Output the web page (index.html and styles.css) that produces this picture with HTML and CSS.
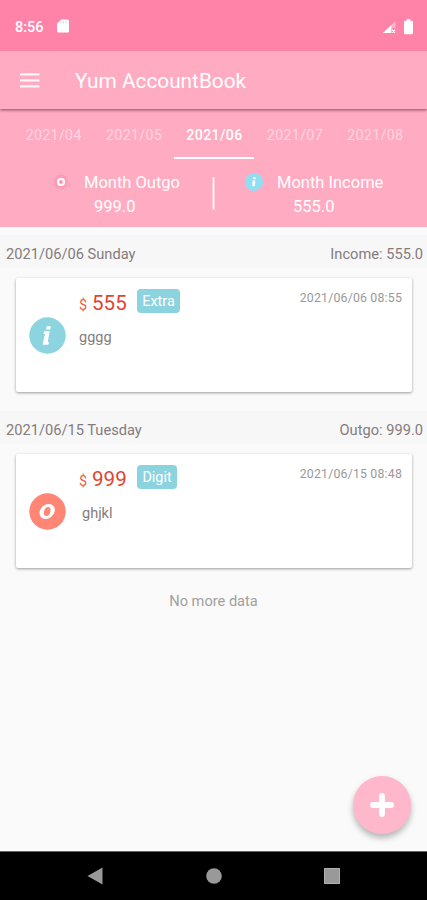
FILE: index.html
```html
<!DOCTYPE html>
<html lang="en">
<head>
<meta charset="utf-8">
<title>Yum AccountBook</title>
<link rel="stylesheet" href="styles.css">
</head>
<body>
<div class="screen">
  <div class="status">
    <span class="clock">8:56</span>
    <svg class="sd" width="12" height="14" viewBox="0 0 12 14"><path d="M4.3 .5H10.5Q12 .5 12 2V12Q12 13.5 10.5 13.5H1.5Q0 13.5 0 12V4.8Z" fill="#fff"/><path d="M4.2 2.3v2.2M6.5 2.3v2.2M8.8 2.3v2.2" stroke="#ffb5c9" stroke-width=".8"/></svg>
    <svg class="signal" width="13" height="12" viewBox="0 0 13 12"><path d="M0 12L12.5 0V7H8.5V12Z" fill="#fff" opacity=".4"/><path d="M0 12L8.3 4V12Z" fill="#fff"/><path d="M9.3 8.7L12 11.7M12 8.7L9.3 11.7" stroke="#fff" stroke-width="1.3"/></svg>
    <svg class="battery" width="9" height="16" viewBox="0 0 9 16"><path d="M2.7 0H6.3V1.7H7.8Q9 1.7 9 2.9V14Q9 15.3 7.8 15.3H1.2Q0 15.3 0 14V2.9Q0 1.7 1.2 1.7H2.7Z" fill="#fff"/></svg>
  </div>
  <header class="appbar">
    <svg class="menu" width="20" height="15" viewBox="0 0 20 15"><path d="M0 1.4H19.5M0 7.4H19.5M0 13.4H19.5" stroke="#fff" stroke-width="2.4" opacity=".9"/></svg>
    <h1>Yum AccountBook</h1>
  </header>
  <nav class="tabs">
    <span>2021/04</span><span>2021/05</span><span class="active">2021/06</span><span>2021/07</span><span>2021/08</span>
  </nav>
  <section class="summary">
    <div class="total outgo">
      <svg width="18" height="18" viewBox="0 0 18 18"><circle cx="9" cy="9" r="7.5" fill="#ff9db9"/><circle cx="9" cy="9" r="3" fill="#ff91ad" stroke="#fff" stroke-width="2.2"/></svg>
      <div><p>Month Outgo</p><p class="sum">999.0</p></div>
    </div>
    <i class="divider"></i>
    <div class="total income">
      <svg width="18" height="18" viewBox="0 0 18 18"><circle cx="9" cy="9" r="9" fill="#91def3"/><path d="M9.5 4.3L9.3 6M9 7.4L8.5 13.2" stroke="#fff" stroke-width="2.7"/></svg>
      <div><p>Month Income</p><p class="sum">555.0</p></div>
    </div>
  </section>
  <main>
    <div class="day"><span>2021/06/06 Sunday</span><span>Income: 555.0</span></div>
    <article class="card">
      <svg class="kind" width="37" height="37" viewBox="0 0 37 37"><circle cx="18.5" cy="18.5" r="18.2" fill="#8cd4e0"/><path d="M17.7 9.2H21.8L21.2 12.4H17.1ZM15 14.3H20.8L18.7 24.9H20L19.4 27.7H13.6L15.9 17H14.5Z" fill="#fff"/></svg>
      <div class="detail">
        <div class="line"><small>$</small><b>555</b><em>Extra</em><time>2021/06/06 08:55</time></div>
        <p>gggg</p>
      </div>
    </article>
    <div class="day"><span>2021/06/15 Tuesday</span><span>Outgo: 999.0</span></div>
    <article class="card">
      <svg class="kind" width="37" height="37" viewBox="0 0 37 37"><circle cx="18.5" cy="18.5" r="18.2" fill="#ff8575"/><g transform="translate(3.6) skewX(-12)"><ellipse cx="18.5" cy="18.5" rx="7.5" ry="7.4" fill="#fff"/><ellipse cx="18.5" cy="18.5" rx="3.2" ry="4.6" fill="#ff8575"/></g></svg>
      <div class="detail">
        <div class="line"><small>$</small><b>999</b><em class="digit">Digit</em><time>2021/06/15 08:48</time></div>
        <p class="inset">ghjkl</p>
      </div>
    </article>
    <p class="end">No more data</p>
    <div class="fab"><svg width="24" height="24" viewBox="0 0 24 24"><path d="M12 3V21M3 12H21" stroke="#fff" stroke-width="5.8" stroke-linecap="round"/></svg></div>
  </main>
  <footer class="sysnav">
    <svg width="16" height="18" viewBox="0 0 16 18"><path d="M.5 9L15.5 .5V17.5Z" fill="#999"/></svg>
    <svg width="16" height="16" viewBox="0 0 16 16"><circle cx="8" cy="8" r="7.8" fill="#999"/></svg>
    <svg width="16" height="16" viewBox="0 0 16 16"><path d="M.5 .5H15.5V15.5H.5Z" fill="#999" stroke="#b4b4b4"/></svg>
  </footer>
</div>
</body>
</html>
```

FILE: styles.css
```css
* { box-sizing: border-box; }
body, h1, p { margin: 0; }
body { font-family: Roboto, "Liberation Sans", sans-serif; color: #857b7d; }
svg { display: block; flex: none; }
.screen { width: 427px; height: 900px; display: flex; flex-direction: column; overflow: hidden; background: #fafafa; }

.status { height: 51px; flex: none; display: flex; align-items: center; padding: 2px 14px 0 15px; background: #ff83a8; color: #fff; position: relative; z-index: 2; }
.clock { font-size: 14.5px; font-weight: 500; width: 42px; padding-top: 1px; }
.sd { margin-top: -2px; }
.signal { margin-left: auto; }
.battery { margin-left: 8px; }

.appbar { height: 58px; flex: none; display: flex; align-items: center; padding: 2px 20px 0; background: #ffabc2; color: #fff; position: relative; z-index: 1; box-shadow: 0 1px 3px rgba(70, 20, 40, .65); }
.menu { margin-top: -2px; }
h1 { margin-left: 35px; font-size: 20.8px; font-weight: 400; }

.tabs { height: 50px; flex: none; display: flex; padding: 0 12px 0 13px; background: #ffabc2; color: #ffd5e1; }
.tabs span { flex: 1; text-align: center; font-size: 14.2px; line-height: 52px; letter-spacing: .35px; border-bottom: 2px solid transparent; height: 50px; padding-left: 1px; }
.tabs .active { color: #fff; font-weight: 500; border-color: #fff; }

.summary { height: 68px; flex: none; display: flex; background: #ffabc2; color: #fff; }
.total { display: flex; padding-top: 14px; font-size: 16.5px; line-height: 20px; }
.total p + p { margin-top: 4px; }
.outgo { width: 213px; padding-left: 52px; }
.outgo div { margin-left: 14px; }
.outgo .sum { padding-left: 10px; }
.income { padding-left: 31px; }
.income div { margin-left: 14px; }
.income .sum { padding-left: 16px; }
.divider { width: 1px; height: 31px; margin-top: 19px; background: #fff; outline: .5px solid rgba(255,255,255,.4); }

main { flex: 1; position: relative; padding-top: 8px; }
.day { height: 33px; display: flex; justify-content: space-between; align-items: center; padding: 4px 4px 0 6px; background: #f7f7f7; font-size: 14.65px; }
.card { height: 114px; margin: 10px 15px 19px 16px; display: flex; padding-left: 13px; background: #fff; border-radius: 2px; box-shadow: 0 1px 3px rgba(0, 0, 0, .38); }
.kind { margin-top: 39px; }
.detail { flex: 1; margin-left: 13px; padding-top: 11px; }
.line { display: flex; height: 27px; padding-right: 10px; }
.line small { width: 13px; font-size: 14.5px; line-height: 33px; color: #ec604f; }
.line b { width: 45px; font-size: 20.6px; font-weight: 400; line-height: 29px; color: #e24432; }
.line em { width: 43px; height: 24px; border-radius: 4px; background: #8bd3df; color: #fff; text-align: center; font-size: 14.4px; font-style: normal; line-height: 25px; }
.line em.digit { width: 40px; }
.line time { margin-left: auto; font-size: 12.3px; line-height: 18px; color: #999; letter-spacing: .2px; }
.detail p { margin-top: 13px; font-size: 14.5px; line-height: 18px; }
.detail .inset { padding-left: 3px; }
.end { margin-top: 24px; text-align: center; font-size: 14.6px; line-height: 18px; color: #a0a0a0; }
.fab { position: absolute; right: 16px; bottom: 17px; width: 58px; height: 58px; border-radius: 50%; display: grid; place-items: center; background: #ffb7cc; box-shadow: 0 4px 6px rgba(0, 0, 0, .28); }

.sysnav { height: 49px; flex: none; display: flex; justify-content: space-between; align-items: center; padding: 0 87px; background: #000; border-top: 1px solid #666; }
```
